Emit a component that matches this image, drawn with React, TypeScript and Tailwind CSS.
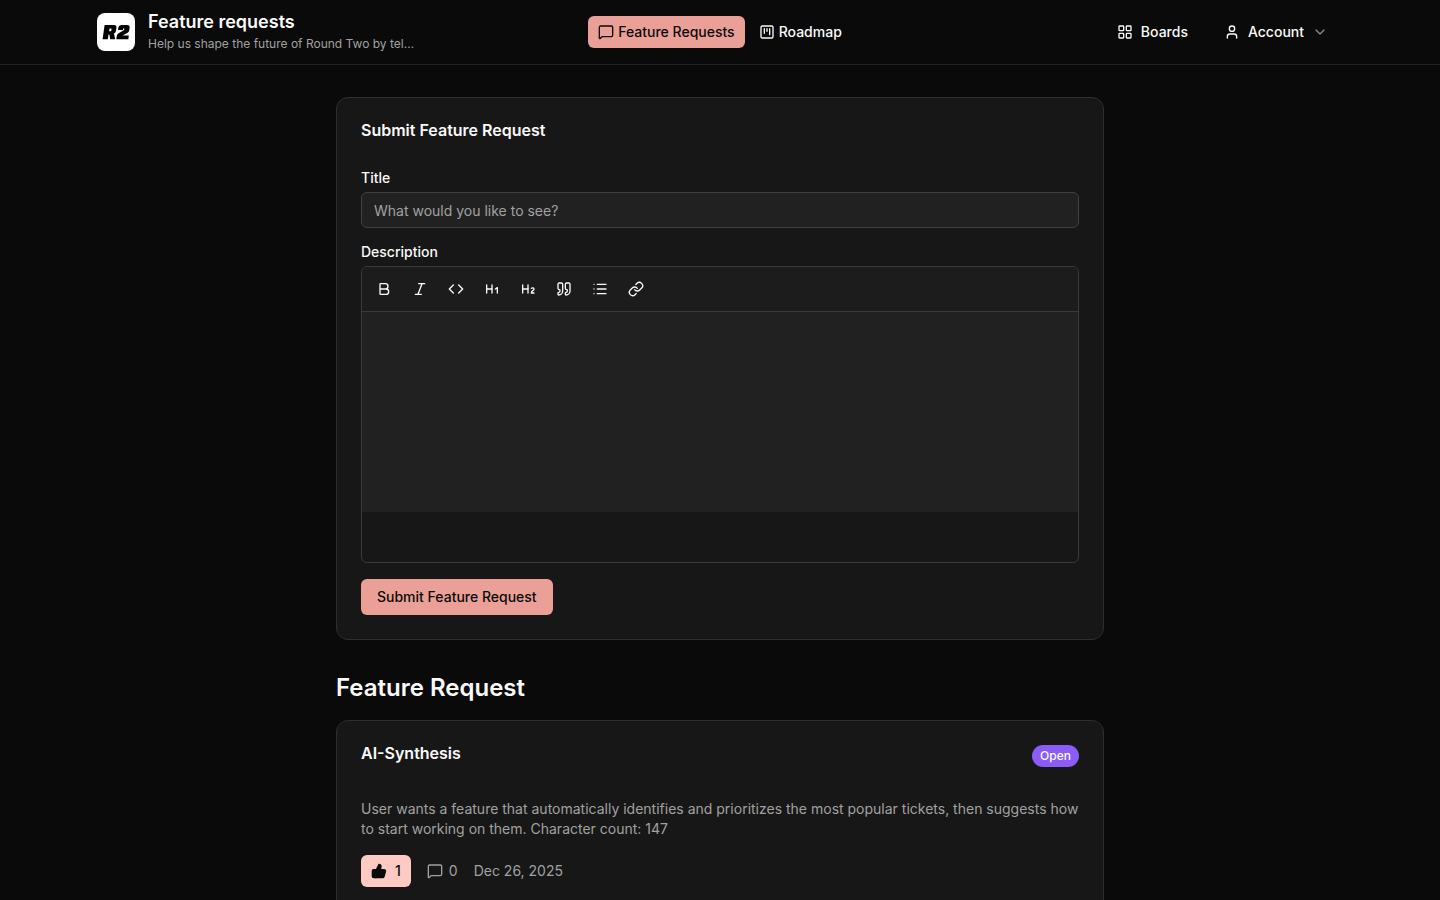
import { Bold, ChevronDown, Code, Heading1, Heading2, Italic, LayoutGrid, Link, List, Quote, SquareKanban, ThumbsUp, User } from "lucide-react";

const tools = [
  { name: "Bold", Icon: Bold },
  { name: "Italic", Icon: Italic },
  { name: "Code", Icon: Code },
  { name: "Heading 1", Icon: Heading1 },
  { name: "Heading 2", Icon: Heading2 },
  { name: "Quote", Icon: Quote },
  { name: "List", Icon: List },
  { name: "Link", Icon: Link },
];

function MessageIcon() {
  return (
    <svg className="size-4 shrink-0" viewBox="0 0 24 24" fill="none" stroke="currentColor" strokeWidth="2" strokeLinecap="round" strokeLinejoin="round" aria-hidden="true">
      <path d="M22 17a2 2 0 0 1-2 2H6.828a2 2 0 0 0-1.414.586l-2.202 2.202A.71.71 0 0 1 2 21.286V5a2 2 0 0 1 2-2h16a2 2 0 0 1 2 2z" />
    </svg>
  );
}

function Logo() {
  return (
    <svg className="size-10 shrink-0" viewBox="0 0 40 40" role="img" aria-label="R2">
      <rect x="1" y="1" width="38" height="38" rx="8" fill="#fff" />
      <path fillRule="evenodd" fill="#000" d="M8.6 13H18.2Q20.8 13 20.4 16L20 18.8Q19.7 20.8 18 21.4L19.2 27.3H14.2L13.4 22.4H12.5L11.8 27.3H6.6ZM13.5 16.4L13.1 19.3H14.7Q15.3 19.3 15.4 18.6L15.6 17.1Q15.7 16.4 15.1 16.4Z" />
      <path fill="#000" d="M22 18L22.4 15.5Q22.8 13 25.3 13H31Q34 13 33.6 15.8L33.2 18.5Q33 20 31.6 20.8L26.5 23.6H32.8L32.3 27.3H20.3L20.8 23.7Q21 22.3 22.3 21.5L28.1 18.1L28.3 16.6H27.1L26.9 18Z" />
    </svg>
  );
}

export default function App() {
  return (
    <div className="h-screen overflow-hidden bg-[#0a0a0a] font-['Inter',sans-serif] text-sm text-neutral-50">
      <header className="border-b border-[#222222]">
        <div className="mx-auto grid h-16 max-w-7xl grid-cols-[1fr_auto_1fr] items-center px-4">
          <div className="flex min-w-0 items-center gap-3">
            <Logo />
            <div className="w-67 min-w-0">
              <p className="text-lg/6 font-semibold">Feature requests</p>
              <p className="truncate text-xs/5 text-[#a1a1a1]">Help us shape the future of Round Two by telling us what you need</p>
            </div>
          </div>
          <nav className="flex items-center gap-1 font-medium">
            <a href="#requests" className="flex h-8 items-center gap-1 rounded-md bg-[#eaa097] px-2.5 text-neutral-950">
              <MessageIcon />
              Feature Requests
            </a>
            <a href="#roadmap" className="flex h-8 items-center gap-1 rounded-md px-2.5">
              <SquareKanban size={16} />
              Roadmap
            </a>
          </nav>
          <div className="flex items-center justify-end gap-1 font-medium">
            <a href="#boards" className="flex h-9 items-center gap-2 px-4">
              <LayoutGrid size={16} />
              Boards
            </a>
            <button className="flex h-9 items-center gap-2 px-4">
              <User size={16} />
              Account
              <ChevronDown size={16} className="text-[#8a8a8a]" />
            </button>
          </div>
        </div>
      </header>

      <main className="mx-auto max-w-3xl pt-8">
        <form className="rounded-xl border border-[#2e2e2e] bg-[#171717] p-6" onSubmit={(e) => e.preventDefault()}>
          <h2 className="text-base/4 font-semibold">Submit Feature Request</h2>
          <label htmlFor="title" className="mt-8 block font-medium leading-4">Title</label>
          <input id="title" placeholder="What would you like to see?" className="mt-1.5 block h-9 w-full rounded-md border border-[#404040] bg-[#212121] px-3 placeholder:text-[#a1a1a1]" />
          <label htmlFor="description" className="mt-4 block font-medium leading-4">Description</label>
          <div className="mt-1.5 overflow-hidden rounded-md border border-[#3a3a3a]">
            <div className="flex gap-1 border-b border-[#3a3a3a] bg-[#1c1c1c] px-1.5 py-1.5">
              {tools.map(({ name, Icon }) => (
                <button key={name} type="button" aria-label={name} className="flex size-8 items-center justify-center rounded-md">
                  <Icon size={16} />
                </button>
              ))}
            </div>
            <textarea id="description" className="block h-50 w-full resize-none bg-[#212121] px-3 py-2 outline-none" />
            <div className="h-12.5" />
          </div>
          <button className="mt-4 h-9 rounded-md bg-[#eaa097] px-4 font-medium text-neutral-950">Submit Feature Request</button>
        </form>

        <section id="requests" className="mt-8">
          <h1 className="text-2xl/8 font-semibold">Feature Request</h1>
          <article className="mt-4 rounded-xl border border-[#2e2e2e] bg-[#171717] p-6">
            <div className="flex items-start justify-between">
              <h2 className="text-base/4 font-semibold">AI-Synthesis</h2>
              <span className="rounded-full bg-[#8b5cf6] px-2 py-0.75 text-xs/4 font-medium">Open</span>
            </div>
            <p className="mt-8 text-[#a1a1a1]">
              User wants a feature that automatically identifies and prioritizes the most popular tickets, then suggests how to start working on them. Character count: 147
            </p>
            <div className="mt-4 flex items-center gap-4 text-[#a1a1a1]">
              <button aria-label="Upvote, 1 vote" className="flex h-8 items-center gap-2 rounded-md bg-[#ffc9c4] px-2.5 font-medium text-neutral-950">
                <ThumbsUp size={16} fill="currentColor" />
                1
              </button>
              <span className="flex items-center gap-1.5">
                <MessageIcon />
                0
              </span>
              <time dateTime="2025-12-26">Dec 26, 2025</time>
            </div>
          </article>
        </section>
      </main>
    </div>
  );
}
